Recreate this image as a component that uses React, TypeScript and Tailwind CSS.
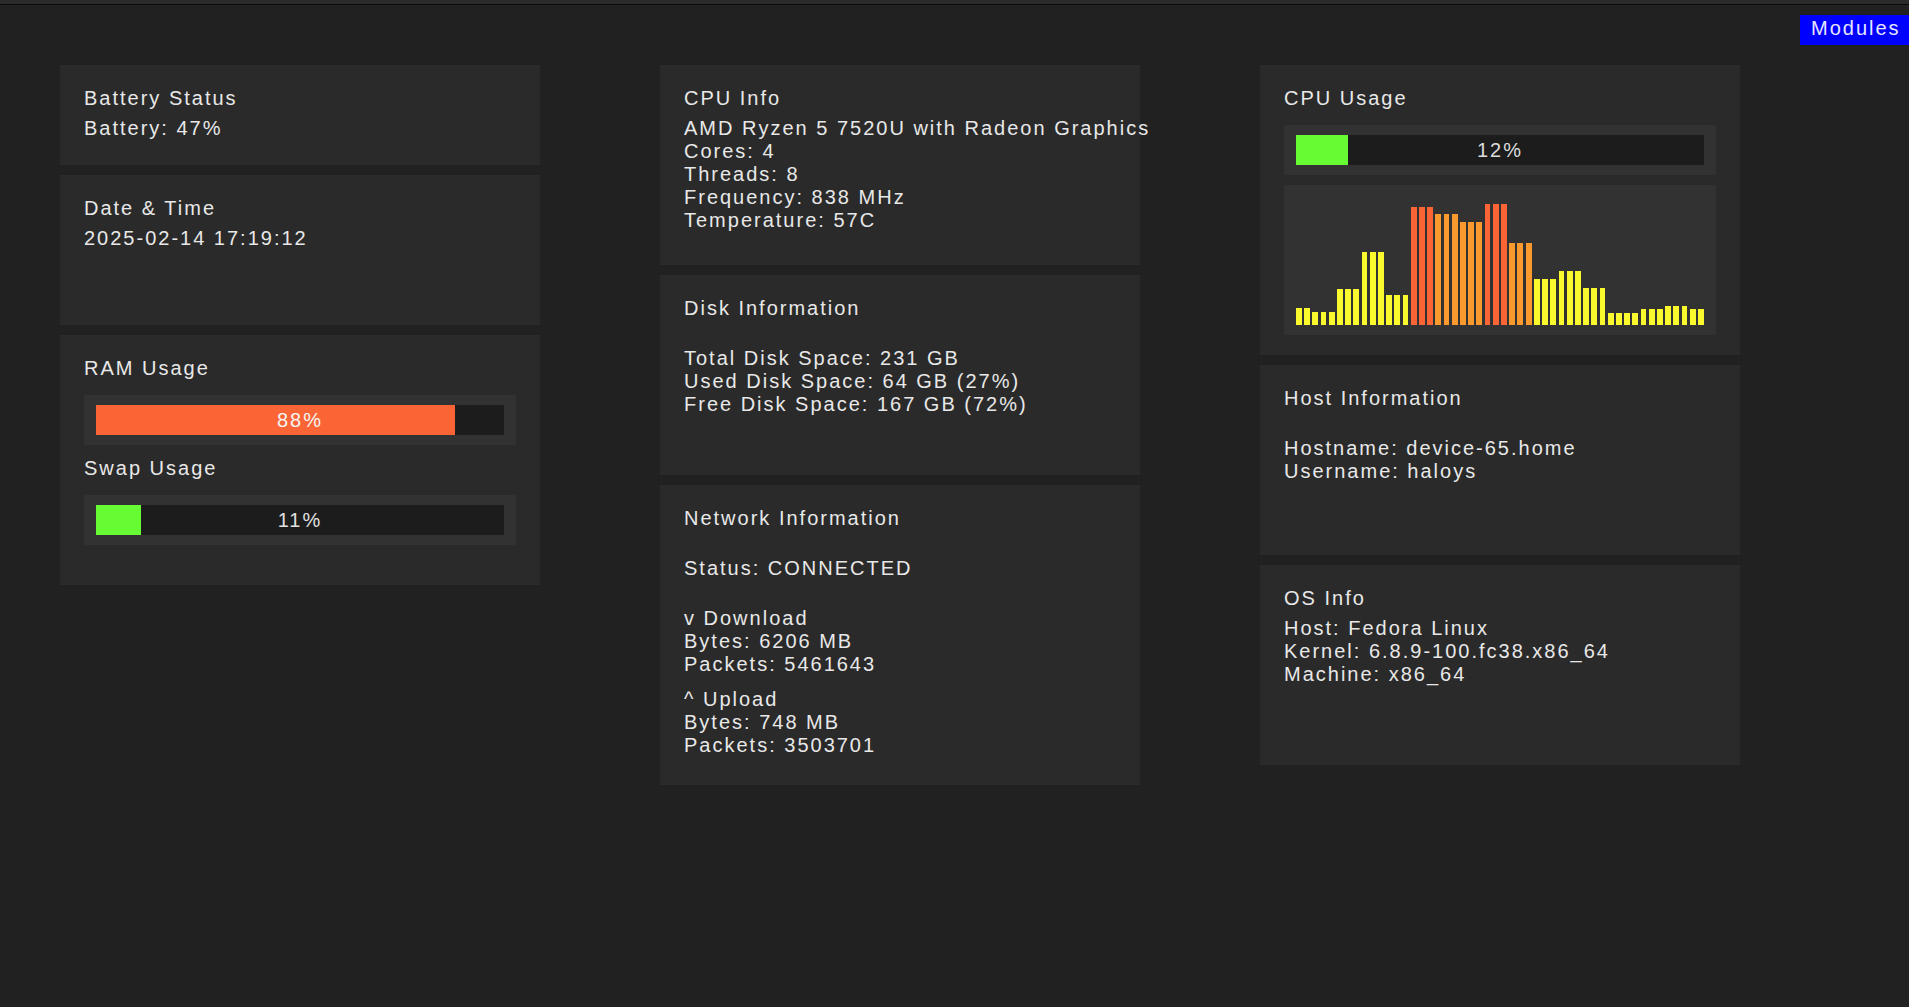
import React from "react";

const FONT = { fontFamily: '"Liberation Sans", Arial, sans-serif' };

type BarSpec = { h: number; c: string };
const Y = "bg-[#f9f92d]";
const O = "bg-[#fa9a2e]";
const R = "bg-[#fb6535]";

const chart: BarSpec[] = [
  { h: 17, c: Y }, { h: 17, c: Y }, { h: 13, c: Y }, { h: 13, c: Y }, { h: 13, c: Y },
  { h: 36, c: Y }, { h: 36, c: Y }, { h: 36, c: Y },
  { h: 73, c: Y }, { h: 73, c: Y }, { h: 73, c: Y },
  { h: 30, c: Y }, { h: 30, c: Y }, { h: 30, c: Y },
  { h: 118, c: R }, { h: 118, c: R }, { h: 118, c: R },
  { h: 111, c: O }, { h: 111, c: O }, { h: 111, c: O },
  { h: 103, c: O }, { h: 103, c: O }, { h: 103, c: O },
  { h: 121, c: R }, { h: 121, c: R }, { h: 121, c: R },
  { h: 82, c: O }, { h: 82, c: O }, { h: 82, c: O },
  { h: 46, c: Y }, { h: 46, c: Y }, { h: 46, c: Y },
  { h: 54, c: Y }, { h: 54, c: Y }, { h: 54, c: Y },
  { h: 37, c: Y }, { h: 37, c: Y }, { h: 37, c: Y },
  { h: 12, c: Y }, { h: 12, c: Y }, { h: 12, c: Y }, { h: 12, c: Y },
  { h: 16, c: Y }, { h: 16, c: Y }, { h: 16, c: Y },
  { h: 19, c: Y }, { h: 19, c: Y }, { h: 19, c: Y },
  { h: 16, c: Y }, { h: 16, c: Y },
];

function Card({ h, children }: { h: string; children: React.ReactNode }) {
  return (
    <div className={`bg-[#2a2a2a] pl-[24px] pr-[24px] pt-[22px] ${h}`}>{children}</div>
  );
}

function Title({ children }: { children: React.ReactNode }) {
  return <div className="leading-[23px] whitespace-nowrap">{children}</div>;
}

function Lines({ lines, className = "" }: { lines: string[]; className?: string }) {
  return (
    <div className={`leading-[23px] whitespace-nowrap ${className}`}>
      {lines.map((l, i) => (
        <div key={i}>{l}</div>
      ))}
    </div>
  );
}

function Meter({ pct, fill, label, labelColor }: { pct: number; fill: string; label: string; labelColor: string }) {
  return (
    <div className="bg-[#323232] px-[12px] py-[10px]">
      <div className="relative h-[30px] bg-[#1c1c1c]">
        <div className={`h-full ${fill}`} style={{ width: `${pct}%` }} />
        <div className={`absolute inset-0 flex items-center justify-center leading-[30px] ${labelColor}`}>
          {label}
        </div>
      </div>
    </div>
  );
}

export default function App() {
  return (
    <div
      className="w-[1909px] h-[1007px] bg-[#212121] text-[#e8e8e8] text-[20px] tracking-[2px] overflow-hidden"
      style={FONT}
    >
      <div className="h-[5px] bg-[#2b2b2b] border-b border-[#0a0a0a]" />
      <div className="flex justify-end mt-[10px]">
        <div className="w-[109px] h-[30px] bg-[#0000ff] text-[#e6e6ff] pl-[11px] leading-[26px]">Modules</div>
      </div>
      <div className="mt-[20px] pl-[60px] grid grid-cols-[480px_480px_480px] gap-x-[120px] items-start">
        {/* Column 1 */}
        <div className="flex flex-col gap-[10px]">
          <Card h="h-[100px]">
            <Title>Battery Status</Title>
            <Lines className="mt-[7px]" lines={["Battery: 47%"]} />
          </Card>
          <Card h="h-[150px]">
            <Title>Date &amp; Time</Title>
            <Lines className="mt-[7px]" lines={["2025-02-14 17:19:12"]} />
          </Card>
          <Card h="h-[250px]">
            <Title>RAM Usage</Title>
            <div className="mt-[15px]">
              <Meter pct={88} fill="bg-[#fb6535]" label="88%" labelColor="text-[#f4f4f4]" />
            </div>
            <div className="mt-[12px]">
              <Title>Swap Usage</Title>
            </div>
            <div className="mt-[15px]">
              <Meter pct={11} fill="bg-[#66fb33]" label="11%" labelColor="text-[#e0e0e0]" />
            </div>
          </Card>
        </div>

        {/* Column 2 */}
        <div className="flex flex-col gap-[10px]">
          <Card h="h-[200px]">
            <Title>CPU Info</Title>
            <Lines
              className="mt-[7px]"
              lines={[
                "AMD Ryzen 5 7520U with Radeon Graphics",
                "Cores: 4",
                "Threads: 8",
                "Frequency: 838 MHz",
                "Temperature: 57C",
              ]}
            />
          </Card>
          <Card h="h-[200px]">
            <Title>Disk Information</Title>
            <Lines
              className="mt-[27px]"
              lines={["Total Disk Space: 231 GB", "Used Disk Space: 64 GB (27%)", "Free Disk Space: 167 GB (72%)"]}
            />
          </Card>
          <Card h="h-[300px]">
            <Title>Network Information</Title>
            <Lines className="mt-[27px]" lines={["Status: CONNECTED"]} />
            <Lines className="mt-[27px]" lines={["v Download", "Bytes: 6206 MB", "Packets: 5461643"]} />
            <Lines className="mt-[12px]" lines={["^ Upload", "Bytes: 748 MB", "Packets: 3503701"]} />
          </Card>
        </div>

        {/* Column 3 */}
        <div className="flex flex-col gap-[10px]">
          <Card h="h-[290px]">
            <Title>CPU Usage</Title>
            <div className="mt-[15px]">
              <Meter pct={12.7} fill="bg-[#66fb33]" label="12%" labelColor="text-[#dcdcdc]" />
            </div>
            <div className="mt-[10px] h-[150px] bg-[#323232] px-[12px] pb-[10px] flex items-end gap-[2.4px]">
              {chart.map((b, i) => (
                <div key={i} className={`flex-1 ${b.c}`} style={{ height: `${b.h}px` }} />
              ))}
            </div>
          </Card>
          <Card h="h-[190px]">
            <Title>Host Information</Title>
            <Lines className="mt-[27px]" lines={["Hostname: device-65.home", "Username: haloys"]} />
          </Card>
          <Card h="h-[200px]">
            <Title>OS Info</Title>
            <Lines
              className="mt-[7px]"
              lines={["Host: Fedora Linux", "Kernel: 6.8.9-100.fc38.x86_64", "Machine: x86_64"]}
            />
          </Card>
        </div>
      </div>
    </div>
  );
}
